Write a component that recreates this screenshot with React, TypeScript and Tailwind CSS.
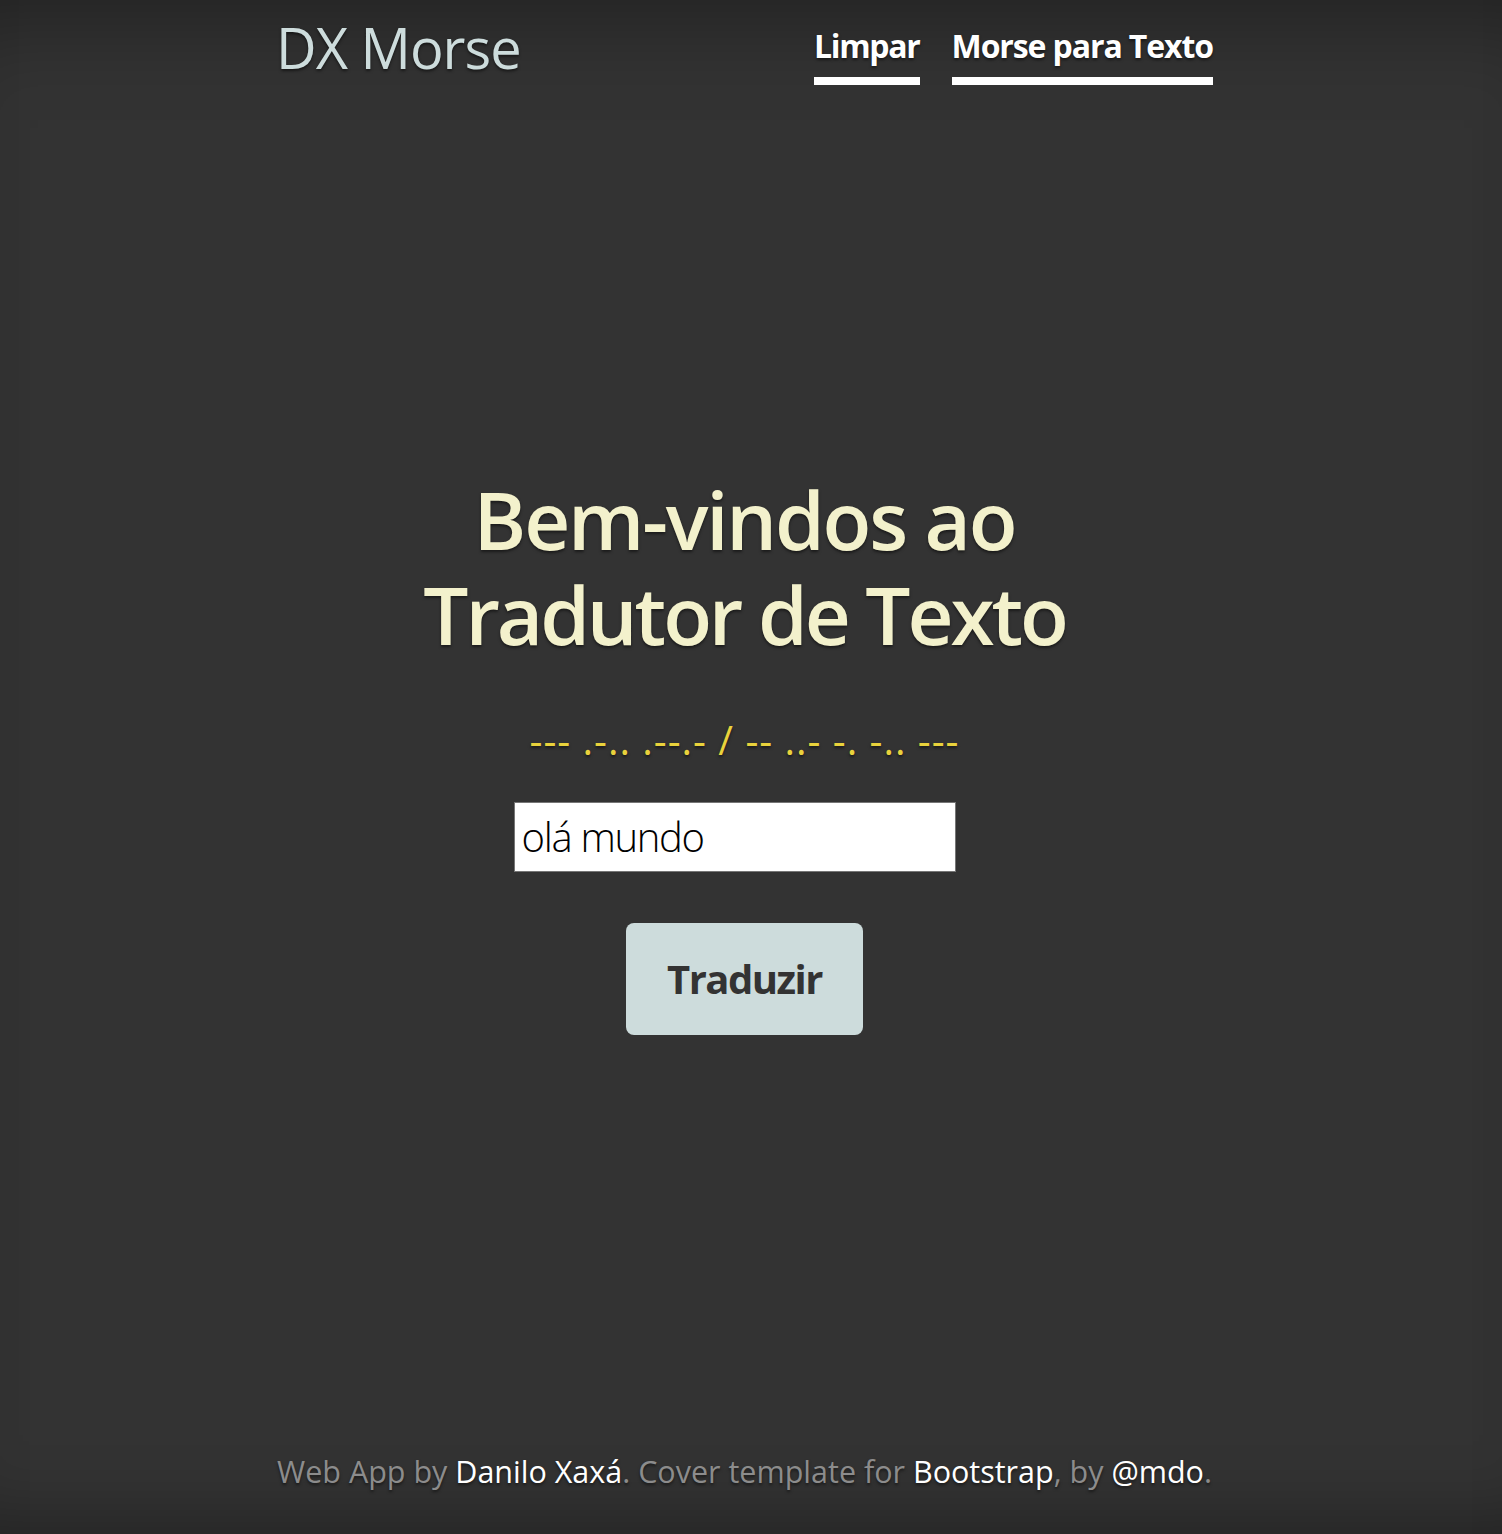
import React from "react";

const shadow = "[text-shadow:0_2px_3px_rgba(0,0,0,0.5)]";

export default function App() {
  return (
    <div
      className={`flex flex-col h-[1534px] w-full bg-[#333333] text-white shadow-[inset_0_90px_90px_-70px_rgba(0,0,0,0.35),inset_0_-70px_70px_-55px_rgba(0,0,0,0.3)] ${shadow}`}
      style={{ fontFamily: '"Open Sans", "Noto Sans", sans-serif' }}
    >
      <header className="ml-[276px] w-[937px] pt-[14px] flex justify-between items-start">
        <h3 className="text-[56px] leading-[1.2] font-normal text-[#cddcdc] tracking-[-1px]">DX Morse</h3>
        <nav className="flex gap-[32px] pt-[8px]">
          <a className="text-[32px] leading-[1.5] font-bold pb-[7px] border-b-[8px] border-white text-white tracking-[-1.3px]" href="#">
            Limpar
          </a>
          <a className="text-[32px] leading-[1.5] font-bold pb-[7px] border-b-[8px] border-white text-white tracking-[-1.1px]" href="#">
            Morse para Texto
          </a>
        </nav>
      </header>

      <main className="mt-[386px] flex flex-col items-center ml-[276px] w-[937px]">
        <h1 className="flex flex-col items-center text-[80px] leading-[95px] font-semibold text-[#f3f1cc] text-center">
          <span className="tracking-[-2.2px]">Bem-vindos ao</span>
          <span className="tracking-[-3.1px]">Tradutor de Texto</span>
        </h1>
        <p className="mt-[49px] text-[40px] leading-[1.5] text-[#e9d23c] tracking-[1px]">
          --- .-.. .--.- / -- ..- -. -.. ---
        </p>
        <div className="mt-[32px] w-[442px] h-[70px] bg-white border border-[#767676] flex items-center pl-[7px] -translate-x-[10px]">
          <span className="text-[40px] font-light text-black [text-shadow:none] tracking-[-1.3px]">olá mundo</span>
        </div>
        <button className="mt-[51px] w-[237px] h-[112px] rounded-[8px] bg-[#cddcdc] text-[#333333] text-[40px] font-bold [text-shadow:none] tracking-[-1.5px]">
          Traduzir
        </button>
      </main>

      <footer className="mt-auto pb-[39px] ml-[276px] w-[937px] text-center text-[30.5px] leading-[1.5] text-[#8c8c8c] tracking-[0px] whitespace-nowrap">
        Web App by <a className="text-white" href="#">Danilo Xaxá</a>. Cover template for{" "}
        <a className="text-white" href="#">Bootstrap</a>, by <a className="text-white" href="#">@mdo</a>.
      </footer>
    </div>
  );
}
